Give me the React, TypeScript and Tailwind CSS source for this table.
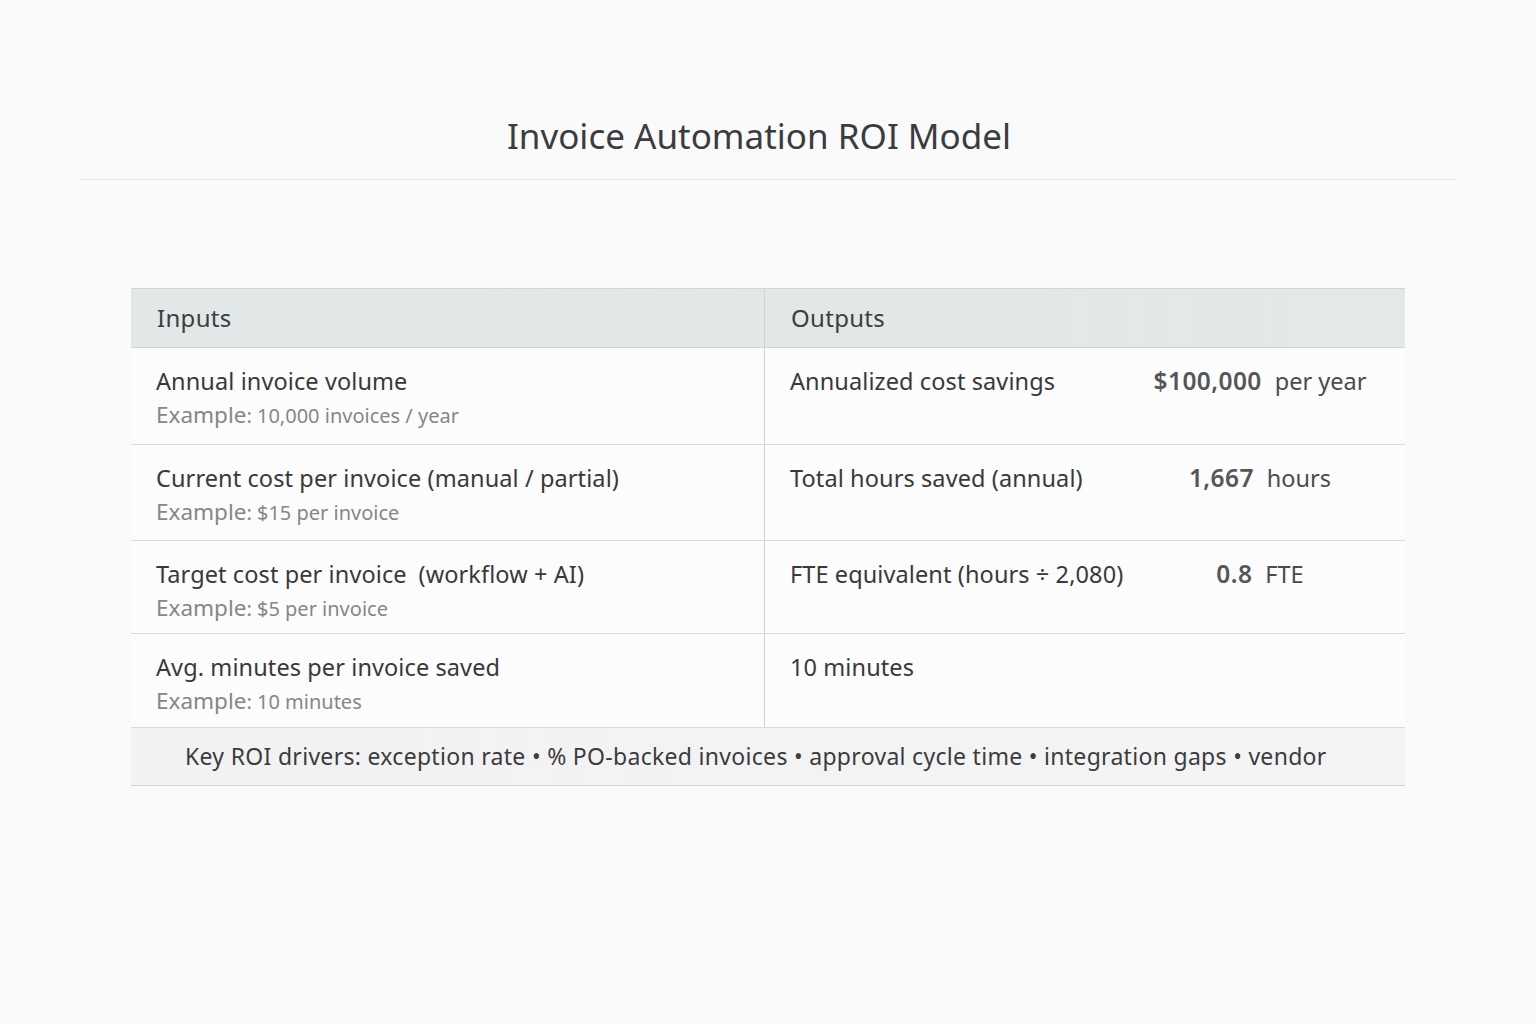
import React from 'react';

interface InputRow {
  label: string;
  exValue: string;
  exUnit: string;
}

interface OutputRow {
  label: string;
  value?: string;
  unit?: string;
}

const inputs: InputRow[] = [
  { label: 'Annual invoice volume', exValue: '10,000', exUnit: 'invoices / year' },
  { label: 'Current cost per invoice (manual / partial)', exValue: '$15', exUnit: 'per invoice' },
  { label: 'Target cost per invoice\u2002(workflow + AI)', exValue: '$5', exUnit: 'per invoice' },
  { label: 'Avg. minutes per invoice saved', exValue: '10', exUnit: 'minutes' },
];

const outputs: OutputRow[] = [
  { label: 'Annualized cost savings', value: '$100,000', unit: 'per year' },
  { label: 'Total hours saved (annual)', value: '1,667', unit: 'hours' },
  { label: 'FTE equivalent (hours \u00f7 2,080)', value: '0.8', unit: 'FTE' },
  { label: '10 minutes' },
];

const rowHeights = ['h-[97px]', 'h-[96px]', 'h-[93px]', 'h-[94px]'];

export default function App() {
  return (
    <div
      className="min-h-screen w-full bg-[#fbfafb] text-[#3a3a3b]"
      style={{ fontFamily: '"Noto Sans", "Open Sans", sans-serif' }}
    >
      <div className="px-[79px] pt-[112px]">
        <h1 className="pr-[18px] text-center text-[35px] leading-[48px] text-[#3b3c3f]">Invoice Automation ROI Model</h1>
        <div className="mt-[19px] h-px bg-[#e4e4e6]" />
      </div>

      <div className="mx-[131px] mt-[108px] w-[1274px]">
        {/* header */}
        <div className="flex h-[60px] border-y border-[#d2d5d6] bg-gradient-to-r from-[#e2e7e8] to-[#e3e9e4]">
          <div className="flex w-[634px] items-center border-r border-[#d0d3d4] pl-[26px] text-[24px] tracking-[0.3px] text-[#3c3e40]">
            Inputs
          </div>
          <div className="flex flex-1 items-center pl-[26px] text-[24px] tracking-[0.3px] text-[#3c3e40]">Outputs</div>
        </div>

        {/* body */}
        {inputs.map((inp, i) => {
          const out = outputs[i];
          return (
            <div key={inp.label} className={`flex ${rowHeights[i]} border-b border-[#d9dadc] bg-[#fcfcfd]`}>
              <div className="w-[634px] border-r border-[#d0d2d4] pl-[25px] pt-[17px]">
                <p className="text-[23.5px] leading-[32px] tracking-[0.1px] text-[#38393b]">{inp.label}</p>
                <p className="mt-[4px] leading-[28px] text-[#85878a]">
                  <span className="text-[22.5px]">Example</span>
                  <span className="text-[20px]">: {inp.exValue} {inp.exUnit}</span>
                </p>
              </div>
              <div className="flex flex-1 items-start pl-[25px] pt-[17px]">
                <p className="flex-1 text-[23.5px] leading-[32px] tracking-[0.1px] text-[#38393b]">{out.label}</p>
                {out.value && (
                  <p className="mr-[10px] w-[270px] text-center text-[23.5px] leading-[32px] text-[#4a4b4e]">
                    <span className="text-[24.5px] font-semibold tracking-[0.4px] text-[#55565a]">{out.value}</span>
                    <span className="ml-[13px]">{out.unit}</span>
                  </p>
                )}
              </div>
            </div>
          );
        })}

        {/* footer */}
        <div className="flex h-[58px] items-center border-b border-[#d6d7d9] bg-gradient-to-r from-[#f2f2f3] to-[#f4f4f5] pl-[54px] text-[23px] tracking-[0.3px] text-[#3b3c3e]">
          Key ROI drivers: exception rate • % PO-backed invoices • approval cycle time • integration gaps • vendor
        </div>
      </div>
    </div>
  );
}
